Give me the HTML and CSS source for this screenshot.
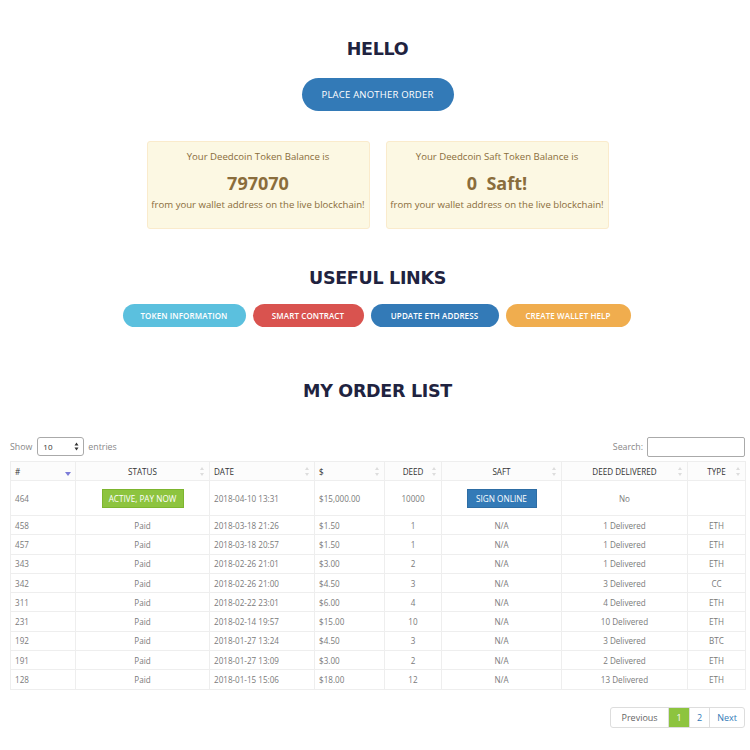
FILE: index.html
```html
<!DOCTYPE html>
<html>
<head>
<meta charset="utf-8">
<link rel="stylesheet" href="styles.css">
</head>
<body>
<div class="page">
  <h1 class="title first">HELLO</h1>
  <div class="center"><a class="pill-btn">PLACE ANOTHER ORDER</a></div>

  <div class="cards">
    <div class="card">
      <div class="card-line">Your Deedcoin Token Balance is</div>
      <div class="card-num">797070</div>
      <div class="card-line">from your wallet address on the live blockchain!</div>
    </div>
    <div class="card">
      <div class="card-line">Your Deedcoin Saft Token Balance is</div>
      <div class="card-num">0&nbsp; Saft!</div>
      <div class="card-line">from your wallet address on the live blockchain!</div>
    </div>
  </div>

  <h2 class="title links-title">USEFUL LINKS</h2>
  <div class="links">
    <a class="link info">TOKEN INFORMATION</a>
    <a class="link danger">SMART CONTRACT</a>
    <a class="link primary">UPDATE ETH ADDRESS</a>
    <a class="link warning">CREATE WALLET HELP</a>
  </div>

  <h2 class="title orders-title">MY ORDER LIST</h2>

  <div class="controls">
    <label class="show">Show
      <span class="select"><span>10</span><svg width="5" height="9" viewBox="0 0 5 9"><path d="M2.5 0.5 L4.5 3.5 H0.5Z M2.5 8.5 L4.5 5.5 H0.5Z" fill="#333"/></svg></span>
      entries</label>
    <label class="search">Search: <span class="search-box"></span></label>
  </div>

  <table class="orders">
    <colgroup>
      <col class="c1"><col class="c2"><col class="c3"><col class="c4"><col class="c5"><col class="c6"><col class="c7"><col class="c8">
    </colgroup>
    <thead>
      <tr>
        <th class="left">#<span class="arrow down"></span></th>
        <th>STATUS<span class="arrows"></span></th>
        <th class="left">DATE<span class="arrows"></span></th>
        <th class="left">$<span class="arrows"></span></th>
        <th>DEED<span class="arrows"></span></th>
        <th>SAFT<span class="arrows"></span></th>
        <th>DEED DELIVERED<span class="arrows"></span></th>
        <th>TYPE<span class="arrows"></span></th>
      </tr>
    </thead>
    <tbody>
      <tr class="tall">
        <td class="left">464</td>
        <td><span class="tag green">ACTIVE, PAY NOW</span></td>
        <td class="left">2018-04-10 13:31</td>
        <td class="left">$15,000.00</td>
        <td>10000</td>
        <td><span class="tag blue">SIGN ONLINE</span></td>
        <td>No</td>
        <td></td>
      </tr>
      <tr><td class="left">458</td><td>Paid</td><td class="left">2018-03-18 21:26</td><td class="left">$1.50</td><td>1</td><td>N/A</td><td>1 Delivered</td><td>ETH</td></tr>
      <tr><td class="left">457</td><td>Paid</td><td class="left">2018-03-18 20:57</td><td class="left">$1.50</td><td>1</td><td>N/A</td><td>1 Delivered</td><td>ETH</td></tr>
      <tr><td class="left">343</td><td>Paid</td><td class="left">2018-02-26 21:01</td><td class="left">$3.00</td><td>2</td><td>N/A</td><td>1 Delivered</td><td>ETH</td></tr>
      <tr><td class="left">342</td><td>Paid</td><td class="left">2018-02-26 21:00</td><td class="left">$4.50</td><td>3</td><td>N/A</td><td>3 Delivered</td><td>CC</td></tr>
      <tr><td class="left">311</td><td>Paid</td><td class="left">2018-02-22 23:01</td><td class="left">$6.00</td><td>4</td><td>N/A</td><td>4 Delivered</td><td>ETH</td></tr>
      <tr><td class="left">231</td><td>Paid</td><td class="left">2018-02-14 19:57</td><td class="left">$15.00</td><td>10</td><td>N/A</td><td>10 Delivered</td><td>ETH</td></tr>
      <tr><td class="left">192</td><td>Paid</td><td class="left">2018-01-27 13:24</td><td class="left">$4.50</td><td>3</td><td>N/A</td><td>3 Delivered</td><td>BTC</td></tr>
      <tr><td class="left">191</td><td>Paid</td><td class="left">2018-01-27 13:09</td><td class="left">$3.00</td><td>2</td><td>N/A</td><td>2 Delivered</td><td>ETH</td></tr>
      <tr><td class="left">128</td><td>Paid</td><td class="left">2018-01-15 15:06</td><td class="left">$18.00</td><td>12</td><td>N/A</td><td>13 Delivered</td><td>ETH</td></tr>
    </tbody>
  </table>

  <div class="pager-wrap">
    <div class="pager">
      <a class="pg prev">Previous</a>
      <a class="pg active">1</a>
      <a class="pg">2</a>
      <a class="pg">Next</a>
    </div>
  </div>
</div>
</body>
</html>
```

FILE: styles.css
```css
* { box-sizing: border-box; }
html, body { margin: 0; padding: 0; background: #fff; }
body { font-family: "Open Sans", "DejaVu Sans", sans-serif; color: #777; }
.page { padding: 0 5px 20px 10px; }

.title {
  margin: 0;
  text-align: center;
  font-family: "DejaVu Sans", sans-serif;
  font-weight: 700;
  font-size: 17.5px;
  line-height: 24px;
  color: #1f2340;
  letter-spacing: -0.3px;
}
.first { padding-top: 37px; }
.links-title { margin-top: 37px; }
.orders-title { margin-top: 52px; }

.center { display: flex; justify-content: center; margin-top: 17px; }
.pill-btn {
  display: flex; align-items: center; justify-content: center;
  width: 152px; height: 33px;
  border-radius: 17px;
  background: #337ab7;
  color: #fff;
  font-size: 9.5px;
  letter-spacing: 0.2px;
}

.cards { display: flex; justify-content: center; gap: 16px; margin-top: 30px; }
.card {
  width: 223px; height: 88px;
  background: #fcf8e3;
  border: 1px solid #faebcc;
  border-radius: 3px;
  color: #8a6d3b;
  text-align: center;
  padding-top: 9px;
}
.card-line { font-size: 9.6px; line-height: 11px; }
.card-num { font-size: 18px; font-weight: 700; line-height: 22px; margin: 10px 0 5px; }

.links { display: flex; justify-content: center; gap: 7px; margin-top: 14px; padding-right: 2px; }
.link {
  display: flex; align-items: center; justify-content: center;
  height: 23px;
  border-radius: 12px;
  color: #fff;
  font-size: 8px;
  font-weight: 600;
  letter-spacing: 0.1px;
}
.link.info { background: #5bc0de; width: 123px; }
.link.danger { background: #d9534f; width: 111px; }
.link.primary { background: #337ab7; width: 128px; }
.link.warning { background: #f0ad4e; width: 125px; }

.controls { display: flex; justify-content: space-between; align-items: center; margin-top: 34px; height: 19px; font-size: 8.8px; color: #888; }
.show, .search { display: flex; align-items: center; gap: 4px; }
.select {
  display: flex; align-items: center; justify-content: space-between;
  width: 47px; height: 19px;
  border: 1px solid #aaa; border-radius: 3px;
  padding: 0 4px 0 5px;
  color: #333; font-size: 8px;
  margin-left: 1px;
}
.search-box { width: 98px; height: 20px; border: 1px solid #aaa; border-radius: 2px; }

.orders {
  margin-top: 5px;
  width: 735px;
  border-collapse: collapse;
  table-layout: fixed;
  font-size: 8.1px;
  color: #7a7a7a;
}
.c1 { width: 65px; } .c2 { width: 134px; } .c3 { width: 105px; } .c4 { width: 70px; }
.c5 { width: 57px; } .c6 { width: 120px; } .c7 { width: 126px; } .c8 { width: 58px; }
.orders th, .orders td {
  border: 1px solid #eee;
  text-align: center;
  height: 19.3px;
  padding: 0 4px;
  white-space: nowrap;
}
.orders th {
  position: relative;
  font-weight: 400;
  color: #333;
  background: #fcfcfc;
  height: 19px;
}
.orders .left { text-align: left; }
.orders tr.tall td { height: 35px; }

.arrows {
  position: absolute; right: 4px; top: 5px;
  width: 5px; height: 9px;
}
.arrows::before, .arrows::after {
  content: ""; position: absolute; left: 0;
  border-left: 2.5px solid transparent; border-right: 2.5px solid transparent;
}
.arrows::before { top: 0; border-bottom: 3.5px solid #ddd; }
.arrows::after { bottom: 0; border-top: 3.5px solid #ddd; }
.arrow.down {
  position: absolute; right: 4px; top: 10px;
  border-left: 3px solid transparent; border-right: 3px solid transparent;
  border-top: 4px solid #7c7cd8;
}

.tag {
  display: inline-flex; align-items: center; justify-content: center;
  height: 19px; color: #fff; font-size: 8.2px;
}
.tag.green { background: #8dc43f; width: 82px; border: 1px solid #7db52f; }
.tag.blue { background: #337ab7; width: 70px; border: 1px solid #2e6da4; }

.pager-wrap { display: flex; justify-content: flex-end; margin-top: 17px; }
.pager { display: flex; border: 1px solid #ddd; border-radius: 3px; height: 21px; }
.pg {
  display: flex; align-items: center; justify-content: center;
  font-size: 9px; color: #337ab7;
  border-left: 1px solid #ddd;
  padding: 0 7px;
}
.pg.prev { border-left: none; color: #666; width: 57px; }
.pg.active { background: #8dc43f; color: #fff; width: 21px; padding: 0; }
```
